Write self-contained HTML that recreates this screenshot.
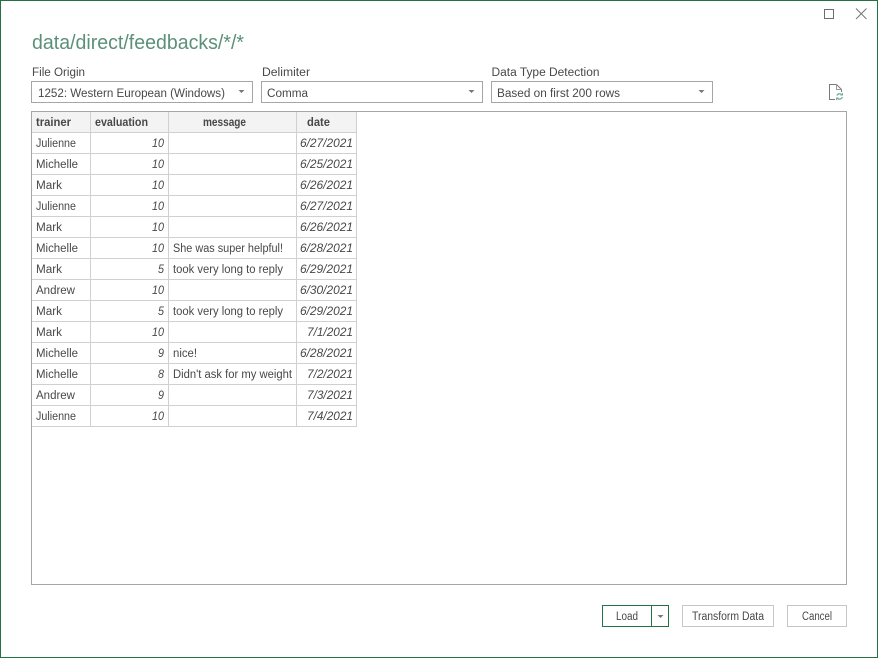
<!DOCTYPE html>
<html><head><meta charset="utf-8">
<style>
html,body{margin:0;padding:0;background:#fff;width:878px;height:658px;overflow:hidden}
svg{display:block}
text{font-family:"Liberation Sans",sans-serif;font-size:11.5px;fill:#484848;}
.h{font-weight:bold;fill:#484848}
.i{font-style:italic}
</style></head><body>
<svg xmlns="http://www.w3.org/2000/svg" width="878" height="658" viewBox="0 0 878 658">
<rect x="0.5" y="0.5" width="877" height="657" fill="#fff" stroke="#217346"/>
<!-- window controls -->
<rect x="824.5" y="9.5" width="9" height="9" fill="none" stroke="#6e6e6e"/>
<path d="M856 8.5L866.5 19M866.5 8.5L856 19" stroke="#777" stroke-width="1" fill="none"/>
<text x="32" y="49" textLength="212" lengthAdjust="spacingAndGlyphs" style="font-size:20px;fill:#5b9079">data/direct/feedbacks/*/*</text>
<!-- labels -->
<text x="32" y="76" textLength="53" lengthAdjust="spacingAndGlyphs">File Origin</text>
<text x="262" y="76" textLength="48" lengthAdjust="spacingAndGlyphs">Delimiter</text>
<text x="491.5" y="76" textLength="108" lengthAdjust="spacingAndGlyphs">Data Type Detection</text>
<!-- selects -->
<g fill="#fff" stroke="#a6a6a6">
<rect x="31.5" y="81.5" width="221" height="21"/>
<rect x="261.5" y="81.5" width="221" height="21"/>
<rect x="491.5" y="81.5" width="221" height="21"/>
</g>
<text x="38" y="97" textLength="187" lengthAdjust="spacingAndGlyphs">1252: Western European (Windows)</text>
<text x="267" y="97" textLength="41" lengthAdjust="spacingAndGlyphs">Comma</text>
<text x="497" y="97" textLength="123" lengthAdjust="spacingAndGlyphs">Based on first 200 rows</text>
<g fill="#777">
<path d="M238.5 90h6l-3 3z"/>
<path d="M468.5 90h6l-3 3z"/>
<path d="M698.5 90h6l-3 3z"/>
</g>
<!-- file refresh icon -->
<path d="M835 99.5H829.5V84.5H836.5L841.5 89.5V92" fill="none" stroke="#7a7a7a"/>
<path d="M836.5 84.5V89.5H841.5" fill="none" stroke="#9a9a9a"/>
<path d="M836.8 95.5A3 3 0 0 1 841.5 94.5M842.3 97A3 3 0 0 1 837.5 98.5" fill="none" stroke="#6fb095" stroke-width="1.3"/>
<path d="M843 92.5v3h-3zM836 100.5v-3h3z" fill="#6fb095"/>
<!-- panel -->
<rect x="31.5" y="111.5" width="815" height="473" fill="#fff" stroke="#a6a6a6"/>
<!-- table -->
<rect x="32" y="112" width="324" height="20" fill="#f3f3f3"/>
<g stroke="#d0d0d0" fill="none">
<path d="M90.5 112V427M168.5 112V427M296.5 112V427M356.5 112V427"/>
<path d="M32 132.5H357M32 153.5H357M32 174.5H357M32 195.5H357M32 216.5H357M32 237.5H357M32 258.5H357M32 279.5H357M32 300.5H357M32 321.5H357M32 342.5H357M32 363.5H357M32 384.5H357M32 405.5H357M32 426.5H357"/>
</g>
<text class="h" x="36" y="126" textLength="35" lengthAdjust="spacingAndGlyphs">trainer</text>
<text class="h" x="95" y="126" textLength="53" lengthAdjust="spacingAndGlyphs">evaluation</text>
<text class="h" x="203" y="126" textLength="43" lengthAdjust="spacingAndGlyphs">message</text>
<text class="h" x="307" y="126" textLength="23" lengthAdjust="spacingAndGlyphs">date</text>
<!-- col 1 -->
<text x="36" y="147" textLength="40" lengthAdjust="spacingAndGlyphs">Julienne</text>
<text x="36" y="168" textLength="42" lengthAdjust="spacingAndGlyphs">Michelle</text>
<text x="36" y="189" textLength="26" lengthAdjust="spacingAndGlyphs">Mark</text>
<text x="36" y="210" textLength="40" lengthAdjust="spacingAndGlyphs">Julienne</text>
<text x="36" y="231" textLength="26" lengthAdjust="spacingAndGlyphs">Mark</text>
<text x="36" y="252" textLength="42" lengthAdjust="spacingAndGlyphs">Michelle</text>
<text x="36" y="273" textLength="26" lengthAdjust="spacingAndGlyphs">Mark</text>
<text x="36" y="294" textLength="39" lengthAdjust="spacingAndGlyphs">Andrew</text>
<text x="36" y="315" textLength="26" lengthAdjust="spacingAndGlyphs">Mark</text>
<text x="36" y="336" textLength="26" lengthAdjust="spacingAndGlyphs">Mark</text>
<text x="36" y="357" textLength="42" lengthAdjust="spacingAndGlyphs">Michelle</text>
<text x="36" y="378" textLength="42" lengthAdjust="spacingAndGlyphs">Michelle</text>
<text x="36" y="399" textLength="39" lengthAdjust="spacingAndGlyphs">Andrew</text>
<text x="36" y="420" textLength="40" lengthAdjust="spacingAndGlyphs">Julienne</text>
<!-- col 2 -->
<text class="i" x="152" y="147" textLength="12" lengthAdjust="spacingAndGlyphs">10</text>
<text class="i" x="152" y="168" textLength="12" lengthAdjust="spacingAndGlyphs">10</text>
<text class="i" x="152" y="189" textLength="12" lengthAdjust="spacingAndGlyphs">10</text>
<text class="i" x="152" y="210" textLength="12" lengthAdjust="spacingAndGlyphs">10</text>
<text class="i" x="152" y="231" textLength="12" lengthAdjust="spacingAndGlyphs">10</text>
<text class="i" x="152" y="252" textLength="12" lengthAdjust="spacingAndGlyphs">10</text>
<text class="i" x="158" y="273" textLength="6" lengthAdjust="spacingAndGlyphs">5</text>
<text class="i" x="152" y="294" textLength="12" lengthAdjust="spacingAndGlyphs">10</text>
<text class="i" x="158" y="315" textLength="6" lengthAdjust="spacingAndGlyphs">5</text>
<text class="i" x="152" y="336" textLength="12" lengthAdjust="spacingAndGlyphs">10</text>
<text class="i" x="158" y="357" textLength="6" lengthAdjust="spacingAndGlyphs">9</text>
<text class="i" x="158" y="378" textLength="6" lengthAdjust="spacingAndGlyphs">8</text>
<text class="i" x="158" y="399" textLength="6" lengthAdjust="spacingAndGlyphs">9</text>
<text class="i" x="152" y="420" textLength="12" lengthAdjust="spacingAndGlyphs">10</text>
<!-- col 3 -->
<text x="173" y="252" textLength="110" lengthAdjust="spacingAndGlyphs">She was super helpful!</text>
<text x="173" y="273" textLength="110" lengthAdjust="spacingAndGlyphs">took very long to reply</text>
<text x="173" y="315" textLength="110" lengthAdjust="spacingAndGlyphs">took very long to reply</text>
<text x="173" y="357" textLength="24" lengthAdjust="spacingAndGlyphs">nice!</text>
<text x="173" y="378" textLength="119" lengthAdjust="spacingAndGlyphs">Didn't ask for my weight</text>
<!-- col 4 -->
<text class="i" x="300" y="147" textLength="53" lengthAdjust="spacingAndGlyphs">6/27/2021</text>
<text class="i" x="300" y="168" textLength="53" lengthAdjust="spacingAndGlyphs">6/25/2021</text>
<text class="i" x="300" y="189" textLength="53" lengthAdjust="spacingAndGlyphs">6/26/2021</text>
<text class="i" x="300" y="210" textLength="53" lengthAdjust="spacingAndGlyphs">6/27/2021</text>
<text class="i" x="300" y="231" textLength="53" lengthAdjust="spacingAndGlyphs">6/26/2021</text>
<text class="i" x="300" y="252" textLength="53" lengthAdjust="spacingAndGlyphs">6/28/2021</text>
<text class="i" x="300" y="273" textLength="53" lengthAdjust="spacingAndGlyphs">6/29/2021</text>
<text class="i" x="300" y="294" textLength="53" lengthAdjust="spacingAndGlyphs">6/30/2021</text>
<text class="i" x="300" y="315" textLength="53" lengthAdjust="spacingAndGlyphs">6/29/2021</text>
<text class="i" x="307" y="336" textLength="46" lengthAdjust="spacingAndGlyphs">7/1/2021</text>
<text class="i" x="300" y="357" textLength="53" lengthAdjust="spacingAndGlyphs">6/28/2021</text>
<text class="i" x="307" y="378" textLength="46" lengthAdjust="spacingAndGlyphs">7/2/2021</text>
<text class="i" x="307" y="399" textLength="46" lengthAdjust="spacingAndGlyphs">7/3/2021</text>
<text class="i" x="307" y="420" textLength="46" lengthAdjust="spacingAndGlyphs">7/4/2021</text>
<!-- buttons -->
<rect x="602.5" y="605.5" width="66" height="21" fill="#fff" stroke="#217346"/>
<path d="M651.5 605V627" stroke="#217346"/>
<path d="M657.5 615h6l-3 3z" fill="#777"/>
<rect x="682.5" y="605.5" width="91" height="21" fill="#fff" stroke="#c6c6c6"/>
<rect x="787.5" y="605.5" width="59" height="21" fill="#fff" stroke="#c6c6c6"/>
<text x="616" y="620" textLength="22" lengthAdjust="spacingAndGlyphs">Load</text>
<text x="692" y="620" textLength="72" lengthAdjust="spacingAndGlyphs">Transform Data</text>
<text x="802" y="620" textLength="30" lengthAdjust="spacingAndGlyphs">Cancel</text>
</svg>
</body></html>
